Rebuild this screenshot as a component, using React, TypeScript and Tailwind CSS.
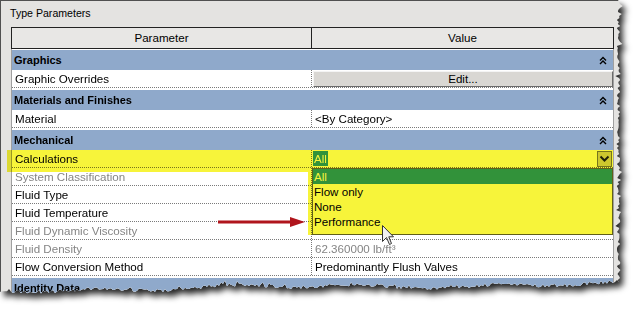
import type { ReactNode } from 'react';

function mulberry32(seed: number) {
  return () => {
    seed |= 0;
    seed = (seed + 0x6d2b79f5) | 0;
    let t = Math.imul(seed ^ (seed >>> 15), 1 | seed);
    t = (t + Math.imul(t ^ (t >>> 7), 61 | t)) ^ t;
    return ((t ^ (t >>> 14)) >>> 0) / 4294967296;
  };
}

// jagged "torn paper" outline for the screenshot clipping
function tornEdge() {
  const rnd = mulberry32(20140311);
  const pts = ['0px 0px', '618px 0px'];
  for (let y = 2; y < 284; y += 2) {
    let x = 618.5 + (rnd() - 0.5) * 3.5;
    if (rnd() < 0.18) x += (rnd() - 0.5) * 6;
    pts.push(`${x.toFixed(1)}px ${y}px`);
  }
  for (let x = 619; x >= 0; x -= 2) {
    let y =
      284 + ((619 - x) / 619) * 6 + Math.sin(x / 21) * 1.6 + Math.sin(x / 57) * 1.5 + (rnd() - 0.5) * 3.5;
    if (rnd() < 0.12) y -= rnd() * 4;
    pts.push(`${x}px ${y.toFixed(1)}px`);
  }
  pts.push('0px 292px');
  return `polygon(${pts.join(', ')})`;
}

function Collapse() {
  return (
    <svg width="8" height="9" viewBox="0 0 8 9">
      <path d="M1 4.5 L4 1.5 L7 4.5 M1 8 L4 5 L7 8" stroke="#000" strokeWidth="1.4" fill="none" />
    </svg>
  );
}

function GroupRow({ label, wide }: { label: string; wide?: boolean }) {
  return (
    <div className={wide ? 'pt-[2px] bg-white' : 'pt-[1px] bg-white'}>
      <div className="h-[20px] bg-[#8fa9cb] flex items-center justify-between pl-[2px] pr-[6px]">
        <span className="font-bold text-[11px]">{label}</span>
        <Collapse />
      </div>
    </div>
  );
}

function DataRow({ label, muted, children }: { label: string; muted?: boolean; children?: ReactNode }) {
  return (
    <div className="h-[18px] flex bg-white border-b border-dotted border-[#7a7a7a] leading-[17px]">
      <div
        className={`w-[300px] shrink-0 pl-[3px] border-r border-dotted border-[#7a7a7a] ${
          muted ? 'text-[#858585]' : 'text-black'
        }`}
      >
        {label}
      </div>
      <div className="flex-1 min-w-0 relative">{children}</div>
    </div>
  );
}

export default function App() {
  return (
    <div className="relative w-[638px] h-[311px] overflow-hidden bg-white font-['Liberation_Sans',Arial,sans-serif] text-[11.6px] text-black">
      <div className="[filter:drop-shadow(4px_5px_3px_rgba(0,0,0,0.85))] w-[626px] h-[300px]">
        <div
          className="w-full h-full bg-[#e4e3e1] border-t border-l border-[#505050]"
          style={{ clipPath: tornEdge() }}
        >
          <div className="h-[26px] pl-[9px] pt-[5px] leading-[14px] text-[10.6px]">Type Parameters</div>

          <div className="ml-[10px] w-[603px]">
            <div className="h-[22px] flex border border-[#222] bg-[#e8e7e5]">
              <div className="w-[300px] border-r border-[#222] flex items-center justify-center">Parameter</div>
              <div className="flex-1 flex items-center justify-center">Value</div>
            </div>

            <div className="border-l border-r border-[#a0a0a0]">
              <GroupRow label="Graphics" />
              <DataRow label="Graphic Overrides">
                <div className="mt-[1px] ml-[1px] h-[16px] bg-[#d9d7d3] border-t border-l border-[#f4f4f4] border-b border-r border-b-[#6a6a6a] border-r-[#6a6a6a] flex items-center justify-center leading-none">
                  Edit...
                </div>
              </DataRow>
              <GroupRow label="Materials and Finishes" wide />
              <DataRow label="Material">
                <span className="pl-[3px]">&lt;By Category&gt;</span>
              </DataRow>
              <GroupRow label="Mechanical" wide />
              <DataRow label="Calculations">
                <div className="flex items-start justify-between h-full pl-[1px] pr-[1px] pt-[1px]">
                  <span className="h-[15px] leading-[15px] px-[1px] bg-[#3399ff] text-white">All</span>
                  <div className="w-[15px] h-[16px] bg-[#d4d0c8] border border-[#7a7a7a] flex items-center justify-center">
                    <svg width="11" height="8" viewBox="0 0 11 8">
                      <path d="M1.5 1.5 L5.5 5.5 L9.5 1.5" stroke="#222" strokeWidth="2" fill="none" />
                    </svg>
                  </div>
                </div>
              </DataRow>
              <DataRow label="System Classification" muted />
              <DataRow label="Fluid Type" />
              <DataRow label="Fluid Temperature" />
              <DataRow label="Fluid Dynamic Viscosity" muted />
              <DataRow label="Fluid Density" muted>
                <span className="pl-[3px] text-[#858585]">62.360000 lb/ft³</span>
              </DataRow>
              <DataRow label="Flow Conversion Method">
                <span className="pl-[3px]">Predominantly Flush Valves</span>
              </DataRow>
              <GroupRow label="Identity Data" wide />
            </div>
          </div>
        </div>
      </div>

      {/* open dropdown list */}
      <div className="absolute left-[312px] top-[168px] w-[301px] h-[67px] bg-white border border-[#646464] leading-[15px]">
        <div className="h-[15px] px-[1px] bg-[#3399ff] text-white">All</div>
        <div className="h-[15px] px-[1px]">Flow only</div>
        <div className="h-[15px] px-[1px]">None</div>
        <div className="h-[15px] px-[1px]">Performance</div>
      </div>

      {/* highlighter marks */}
      <div className="absolute left-[7px] top-[150px] w-[606px] h-[22px] bg-[#f7f43a] mix-blend-multiply" />
      <div className="absolute left-[308px] top-[172px] w-[305px] h-[63px] bg-[#f7f43a] mix-blend-multiply" />

      {/* red callout arrow */}
      <svg className="absolute left-[216px] top-[215px]" width="92" height="14" viewBox="0 0 92 14">
        <path d="M2 7 H78" stroke="#b0151c" strokeWidth="3" />
        <path d="M74 2 L89 7 L74 12 Z" fill="#b0151c" />
      </svg>

      {/* mouse pointer */}
      <svg className="absolute left-[382px] top-[225px]" width="13" height="21" viewBox="0 0 13 21">
        <path
          d="M0.5 0.5 V16.5 L4.5 12.5 L7.5 19.5 L9.5 18.5 L6.8 11.8 H11.5 Z"
          fill="#f2f2f2"
          stroke="#333"
          strokeWidth="1"
        />
      </svg>
    </div>
  );
}
